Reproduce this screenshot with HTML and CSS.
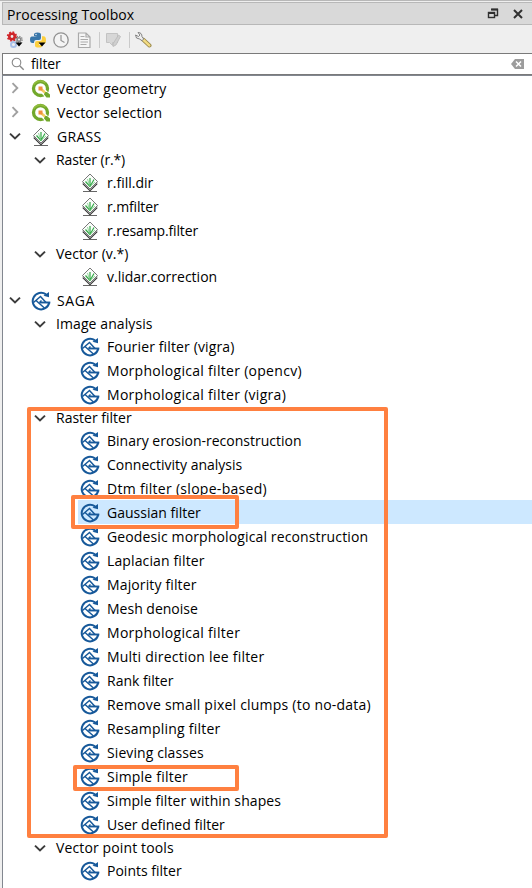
FILE: index.html
```
<!DOCTYPE html>
<html lang="en">
<head>
<meta charset="utf-8">
<title>Processing Toolbox</title>
<link rel="stylesheet" href="styles.css">
</head>
<body>
<svg class="defs" aria-hidden="true">
  <symbol id="closed" viewBox="0 0 12 12"><path d="M3.500 1.200 8.300 6l-4.800 4.800" fill="none" stroke="#a0a0a0" stroke-width="1.900"/></symbol>
  <symbol id="open" viewBox="0 0 12 12"><path d="M1 3.600 6 8.400l5-4.800" fill="none" stroke="#3c3c3c" stroke-width="2"/></symbol>
  <symbol id="qgis" viewBox="0 0 20 20">
    <circle cx="9.500" cy="9.500" r="7" fill="none" stroke="#72a82b" stroke-width="3.300"/>
    <path d="M2.500 6A7.700 7.700 0 0 1 14.500 4" fill="none" stroke="#93bd3c" stroke-width="1.500"/>
    <path d="M11 11l8 8" stroke="#fff" stroke-width="5.500"/>
    <path d="M13.500 13H16l3 2.500v3h-3.500l-2.500-3z" fill="#72a82b"/>
    <path d="M10 10l4 3.500" stroke="#f3cd62" stroke-width="2.500"/>
    <path d="M7.500 7.500h4v4h-4z" fill="#f0913d"/>
  </symbol>
  <symbol id="grass" viewBox="0 0 20 20">
    <path d="M3 18.500h14" stroke="#666" stroke-width="1"/>
    <path d="M2.800 10.500 10 17.700l7.200-7.200" fill="#fff" stroke="#333" stroke-width="1.300"/>
    <path d="M2.500 9 10 16.500 17.500 9" fill="none" stroke="#bbb" stroke-width="1"/>
    <path d="M10 1 17.500 8.500 10 16 2.500 8.500z" fill="#fafdfa" stroke="#686868" stroke-width=".9"/>
    <path d="M10 14V5M10 13.500 5.500 8.500M10 13.500l4-7" fill="none" stroke="#35aa48" stroke-width="1.200"/>
    <path d="M9.700 13 7.500 6M10 13.500l5-4.500" fill="none" stroke="#7acb86" stroke-width=".8"/>
  </symbol>
  <symbol id="saga" viewBox="0 0 20 20">
    <path d="M15 3.400A8.300 8.300 0 1 0 18.200 11.500" fill="none" stroke="#17599a" stroke-width="2"/>
    <path d="M12.500 4.800 18 1v5.200z" fill="#17599a"/>
    <path d="M9 11.500h10.300" stroke="#17599a" stroke-width="1.900"/>
    <path d="M2.500 11.500 9.500 5.500l5.500 6M5 9.500l9 8M8.500 11.500l2-2" fill="none" stroke="#17599a" stroke-width="1.500"/>
  </symbol>
</svg>
<div class="title"><span class="wide-15">Processing Toolbox</span>
  <svg class="wins" viewBox="0 0 40 16"><path d="M4.500 3.500h6v6h-6" fill="none" stroke="#303030" stroke-width="1.400"/><path d="M4 3.500h7" stroke="#303030" stroke-width="2"/><rect x="1.500" y="6.500" width="6" height="5" fill="#d9d9d9" stroke="#303030" stroke-width="1.400"/><path d="M1 7h7" stroke="#303030" stroke-width="2"/><path d="m27 4 8 8m0-8-8 8" stroke="#303030" stroke-width="2"/></svg>
</div>
<div class="tools">
  <svg class="tool" viewBox="0 0 18 18"><circle cx="6" cy="5.500" r="4.200" fill="none" stroke="#d32a2e" stroke-width="2" stroke-dasharray="1.700 1.600"/><circle cx="6" cy="5.500" r="2.700" fill="none" stroke="#cf2529" stroke-width="2.600"/><circle cx="13" cy="8.500" r="3.100" fill="none" stroke="#888" stroke-width="1.500" stroke-dasharray="1.300 1.100"/><circle cx="13" cy="8.500" r="1.800" fill="none" stroke="#888" stroke-width="1.500"/><circle cx="7.500" cy="13.500" r="2.500" fill="none" stroke="#a9c0e8" stroke-width="2"/><path d="M9.500 11.500h7l-3.500 4z" fill="#000"/></svg>
  <svg class="tool" viewBox="0 0 18 18"><path d="M5 5V3.500Q5 1.500 8.500 1.500T12 3.800V7q0 2-2 2H7q-2 0-2 3H3.500Q1 12 1 8.500T3.500 5.500h5" fill="#3976a9"/><path d="M13 5.200h1.500Q17 5.200 17 9t-2.500 4H10v1h3v1q0 1.500-3.500 1.500T6 14.500V12q0-2 2-2h3q2 0 2-2z" fill="#fccf3e"/><circle cx="7" cy="3.500" r=".7" fill="#fff"/><path d="M9.500 11.500h7L13 15.500z" fill="#000"/></svg>
  <svg class="tool" viewBox="0 0 18 18"><circle cx="9" cy="9" r="7.200" fill="#f4f4f4" stroke="#929292" stroke-width="1.300"/><path d="M9 4v5.500l3.500 2" fill="none" stroke="#929292" stroke-width="1.200"/></svg>
  <svg class="tool" viewBox="0 0 18 18"><path d="M3.500 2h7.500l4 4v10.500H3.500zM11 2v4h4" fill="#f5f5f5" stroke="#aaa" stroke-width="1.200"/><path d="M5.500 5.500h4M5.500 8.500h7.500M5.500 11h7.500M5.500 13.500h6" stroke="#aaa"/></svg>
  <i class="sep"></i>
  <svg class="tool pen" viewBox="0 0 18 18"><path d="M1.500 2.500h11v9h-5v3l-3-3h-3z" fill="#d7d7d7" stroke="#c3c3c3"/><path d="m8.500 12 5-8 2 1.500-4.500 8.500-3 1.500z" fill="#cfcfcf" stroke="#b5b5b5" stroke-width=".7"/></svg>
  <i class="sep"></i>
  <svg class="tool wrench" viewBox="0 0 18 18"><path d="m9 8.500 6.500 6" stroke="#97864a" stroke-width="4" stroke-linecap="round"/><path d="m9.500 8.800 5.800 5.500" stroke="#f2db82" stroke-width="2.500" stroke-linecap="round"/><path d="M4 1.500 6 4 4.500 5.500 1.500 4Q1.500 8 5.500 8l2.500 1.700L9.700 8 8 5.700Q8 1.500 4 1.500z" fill="#eee" stroke="#777" stroke-width=".9"/></svg>
</div>
<div class="search">
  <svg class="lens" viewBox="0 0 14 14"><circle cx="5.500" cy="5.500" r="4.300" fill="none" stroke="#888" stroke-width="1.100"/><path d="m8.700 8.700 4 4" stroke="#888" stroke-width="1.400"/></svg>
  <span class="tight">filter</span>
  <svg class="clear" viewBox="0 0 13 10"><path d="M0 5 4 0h9v10H4z" fill="#9c9c9c"/><path d="m5 2.500 5 5m0-5-5 5" stroke="#fff" stroke-width="1.500"/></svg>
</div>
<main class="tree">
  <div class="row root wide-1"><svg class="arrow"><use href="#closed"/></svg><svg class="icon"><use href="#qgis"/></svg><span>Vector geometry</span></div>
  <div class="row root wide-1"><svg class="arrow"><use href="#closed"/></svg><svg class="icon"><use href="#qgis"/></svg><span>Vector selection</span></div>
  <div class="row root wide-3"><svg class="arrow"><use href="#open"/></svg><svg class="icon"><use href="#grass"/></svg><span>GRASS</span></div>
  <div class="row group tight"><svg class="arrow"><use href="#open"/></svg><span>Raster (r.*)</span></div>
  <div class="row leaf"><svg class="icon"><use href="#grass"/></svg><span>r.fill.dir</span></div>
  <div class="row leaf tight"><svg class="icon"><use href="#grass"/></svg><span>r.mfilter</span></div>
  <div class="row leaf tight"><svg class="icon"><use href="#grass"/></svg><span>r.resamp.filter</span></div>
  <div class="row group"><svg class="arrow"><use href="#open"/></svg><span>Vector (v.*)</span></div>
  <div class="row leaf"><svg class="icon"><use href="#grass"/></svg><span>v.lidar.correction</span></div>
  <div class="row root wide-4"><svg class="arrow"><use href="#open"/></svg><svg class="icon"><use href="#saga"/></svg><span>SAGA</span></div>
  <div class="row group wide-1"><svg class="arrow"><use href="#open"/></svg><span>Image analysis</span></div>
  <div class="row leaf wide-15"><svg class="icon"><use href="#saga"/></svg><span>Fourier filter (vigra)</span></div>
  <div class="row leaf wide-3"><svg class="icon"><use href="#saga"/></svg><span>Morphological filter (opencv)</span></div>
  <div class="row leaf wide-3"><svg class="icon"><use href="#saga"/></svg><span>Morphological filter (vigra)</span></div>
  <div class="row group"><svg class="arrow"><use href="#open"/></svg><span>Raster filter</span></div>
  <div class="row leaf"><svg class="icon"><use href="#saga"/></svg><span>Binary erosion-reconstruction</span></div>
  <div class="row leaf"><svg class="icon"><use href="#saga"/></svg><span>Connectivity analysis</span></div>
  <div class="row leaf wide-3"><svg class="icon"><use href="#saga"/></svg><span>Dtm filter (slope-based)</span></div>
  <div class="row leaf selected"><svg class="icon"><use href="#saga"/></svg><span>Gaussian filter</span></div>
  <div class="row leaf wide-15"><svg class="icon"><use href="#saga"/></svg><span>Geodesic morphological reconstruction</span></div>
  <div class="row leaf wide-15"><svg class="icon"><use href="#saga"/></svg><span>Laplacian filter</span></div>
  <div class="row leaf wide-15"><svg class="icon"><use href="#saga"/></svg><span>Majority filter</span></div>
  <div class="row leaf"><svg class="icon"><use href="#saga"/></svg><span>Mesh denoise</span></div>
  <div class="row leaf wide-3"><svg class="icon"><use href="#saga"/></svg><span>Morphological filter</span></div>
  <div class="row leaf wide-2"><svg class="icon"><use href="#saga"/></svg><span>Multi direction lee filter</span></div>
  <div class="row leaf"><svg class="icon"><use href="#saga"/></svg><span>Rank filter</span></div>
  <div class="row leaf wide-2"><svg class="icon"><use href="#saga"/></svg><span>Remove small pixel clumps (to no-data)</span></div>
  <div class="row leaf wide-2"><svg class="icon"><use href="#saga"/></svg><span>Resampling filter</span></div>
  <div class="row leaf wide-1"><svg class="icon"><use href="#saga"/></svg><span>Sieving classes</span></div>
  <div class="row leaf wide-2"><svg class="icon"><use href="#saga"/></svg><span>Simple filter</span></div>
  <div class="row leaf wide-1"><svg class="icon"><use href="#saga"/></svg><span>Simple filter within shapes</span></div>
  <div class="row leaf"><svg class="icon"><use href="#saga"/></svg><span>User defined filter</span></div>
  <div class="row group wide-15"><svg class="arrow"><use href="#open"/></svg><span>Vector point tools</span></div>
  <div class="row leaf"><svg class="icon"><use href="#saga"/></svg><span>Points filter</span></div>
</main>
<div class="mark mark-group"></div>
<div class="mark mark-gaussian"></div>
<div class="mark mark-simple"></div>
</body>
</html>
```
FILE: styles.css
```
* { box-sizing: border-box; }
body {
  margin: 0;
  height: 888px;
  overflow: hidden;
  position: relative;
  background: #efefef;
  border-top: 1px solid #b8b8b8;
  color: #000;
  font: 14px/20px "Open Sans", "Noto Sans", sans-serif;
  letter-spacing: 0;
}
.tight { letter-spacing: -0.13px; }
.wide-1 { letter-spacing: 0.09px; }
.wide-15 { letter-spacing: 0.13px; }
.wide-2 { letter-spacing: 0.22px; }
.wide-3 { letter-spacing: 0.29px; }
.wide-4 { letter-spacing: 0.6px; }
.defs { position: absolute; width: 0; height: 0; }
svg { flex: none; display: block; }
span { white-space: nowrap; }
.title {
  display: flex;
  align-items: center;
  justify-content: space-between;
  height: 23px;
  margin: 1px 0 0 2px;
  padding: 2px 3px 0 4px;
  background: #d9d9d9;
  border: 1px solid #b8b8b8;
  border-right: 0;
}
.title .wide-15 { letter-spacing: 0.05px; }
.wins { width: 40px; height: 16px; margin: -2px 2px 0 0; }
.tools {
  display: flex;
  align-items: center;
  gap: 5px;
  height: 28px;
  padding: 2px 0 0 6px;
}
.tool { width: 18px; height: 18px; }
.pen { margin-left: -1px; }
.wrench { margin-left: -2px; }
.sep { width: 1px; height: 16px; margin: 0 1px; background: #cacaca; }
.search {
  display: flex;
  align-items: center;
  height: 22px;
  margin-left: 2px;
  padding: 0 8px;
  background: #fff;
  border: 1px solid #7a7a7a;
  border-right: 0;
}
.lens { width: 14px; height: 14px; margin-right: 6px; }
.clear { width: 13px; height: 10px; margin-left: auto; }
.tree {
  height: 813px;
  margin-left: 2px;
  background: #fff;
  border-top: 1px solid #828790;
  border-left: 1px solid #828790;
}
.row { display: flex; align-items: center; height: 24px; }
.row span { padding-top: 2px; }
.root { padding-left: 6px; }
.group { height: 22px; padding-left: 31px; }
.leaf { margin-left: 75px; padding-left: 2px; }
.selected { background: #cde8ff; }
.arrow { width: 12px; height: 12px; }
.root .arrow { margin-right: 10px; }
.group .arrow { margin: 1px 10px 0 0; }
.icon { width: 20px; height: 20px; margin: 1px 7px 0 0; }
.root .icon { margin-right: 6px; }
.mark { position: absolute; border: 4px solid #ff8040; border-radius: 2px; }
.mark-group { left: 27px; top: 406px; width: 361px; height: 431px; }
.mark-gaussian { left: 71px; top: 494px; width: 168px; height: 34px; }
.mark-simple { left: 73px; top: 764px; width: 166px; height: 26px; }
```
